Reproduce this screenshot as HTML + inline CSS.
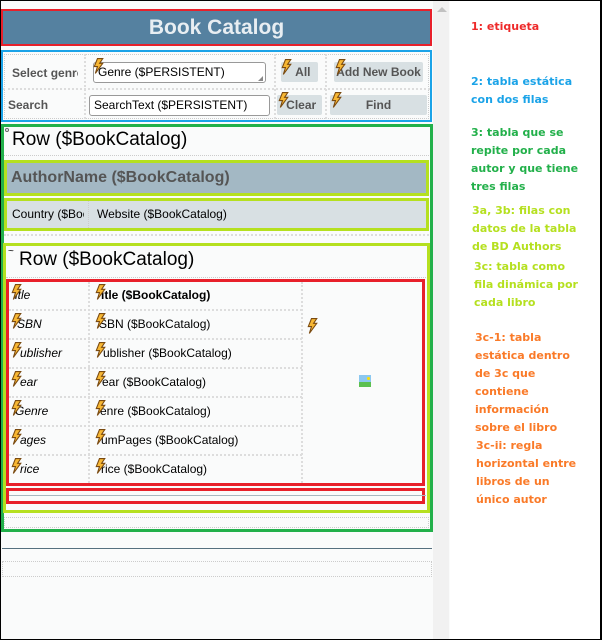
<!DOCTYPE html>
<html><head><meta charset="utf-8"><style>
*{margin:0;padding:0;box-sizing:border-box}
body{width:602px;height:640px;background:#fff;position:relative;overflow:hidden;font-family:"Liberation Sans",Arial,sans-serif}
.a{position:absolute}
.f{border:1px dotted #ccc}
.b{position:absolute;background:#d8e0e3;border-radius:2px;font-weight:bold;color:#555;font-size:12px;text-align:center;line-height:20px}
.t{position:absolute;font-size:12px;color:#000;white-space:nowrap}
.n{font-family:"DejaVu Sans",sans-serif;font-size:11px;font-weight:bold;line-height:18px;position:absolute;left:471px;white-space:nowrap}
svg.z{position:absolute;width:12px;height:16px}
</style></head><body>
<svg width="0" height="0" style="position:absolute"><defs><symbol id="bolt" viewBox="0 0 11 15"><path d="M5 0.5 L10 0.5 L7 5 L10 5 L3 14.5 L5 8 L2 8 Z" fill="#f7b733" stroke="#7a4a10" stroke-width="1"/></symbol></defs></svg>
<div class="a" style="left:0;top:0;width:450px;height:640px;background:#fafbfb"></div>
<div class="a" style="left:433px;top:0;width:16px;height:640px;background:#f1f1f1"></div>
<div class="a" style="left:437px;top:7px;width:0;height:0;border-left:5px solid transparent;border-right:5px solid transparent;border-bottom:5px solid #c1c1c1"></div>
<div class="a" style="left:0;top:0;width:602px;height:640px;border:1px solid #000;border-right-width:2px"></div>

<div class="a" style="left:1px;top:9px;width:431px;height:37px;border:2px solid #e8202a;background:#5581a0;color:#e8eef2;font-weight:bold;font-size:21px;text-align:center;line-height:33px">Book Catalog</div>

<div class="a" style="left:1px;top:50px;width:431px;height:72px;border:2px solid #1aa3e8"></div>
<div class="a f" style="left:4px;top:54px;width:425px;height:65px"></div>
<div class="a" style="left:3px;top:88px;width:427px;border-top:2px dotted #ddd"></div>
<div class="a" style="left:84px;top:54px;height:65px;border-left:2px dotted #ddd"></div>
<div class="a" style="left:274px;top:54px;height:65px;border-left:2px dotted #ddd"></div>
<div class="a" style="left:325px;top:54px;height:65px;border-left:2px dotted #ddd"></div>
<div class="t" style="left:12px;top:66px;color:#555;font-weight:bold;width:66px;overflow:hidden">Select genre</div>
<div class="t" style="left:8px;top:98px;color:#555;font-weight:bold">Search</div>
<div class="a" style="left:93px;top:62px;width:173px;height:21px;border:1px solid #999;border-radius:3px;background:#fff;font-size:12px;line-height:19px;padding-left:4px">Genre ($PERSISTENT)</div>
<div class="a" style="left:258px;top:76px;width:0;height:0;border-left:5px solid transparent;border-bottom:5px solid #888"></div>
<div class="a" style="left:89px;top:95px;width:181px;height:21px;border:1px solid #999;border-radius:3px;background:#fff;font-size:12px;line-height:19px;padding-left:4px">SearchText ($PERSISTENT)</div>
<div class="b" style="left:281px;top:62px;width:37px">&nbsp;&nbsp;All</div>
<div class="b" style="left:334px;top:62px;width:89px">Add New Book</div>
<div class="b" style="left:277px;top:95px;width:45px">&nbsp;Clear</div>
<div class="b" style="left:330px;top:95px;width:97px">Find</div>
<svg class="z" style="left:92px;top:58px"><use href="#bolt"/></svg>
<svg class="z" style="left:280px;top:59px"><use href="#bolt"/></svg>
<svg class="z" style="left:334px;top:59px"><use href="#bolt"/></svg>
<svg class="z" style="left:277px;top:92px"><use href="#bolt"/></svg>
<svg class="z" style="left:330px;top:92px"><use href="#bolt"/></svg>

<div class="a" style="left:1px;top:124px;width:432px;height:408px;border:3px solid #22b04a"></div>
<div class="t" style="left:12px;top:129px;font-size:19px">Row ($BookCatalog)</div>
<div class="a" style="left:5px;top:128px;width:4px;height:4px;border:1px solid #666;border-radius:50%"></div>
<div class="a" style="left:4px;top:155px;width:425px;border-top:1px dotted #ccc"></div>
<div class="a" style="left:4px;top:160px;width:425px;height:36px;border:3px solid #b5e01f;background:#a3b8c4;color:#555;font-weight:bold;font-size:16px;line-height:30px;padding-left:4px">AuthorName ($BookCatalog)</div>
<div class="a" style="left:4px;top:198px;width:425px;height:33px;border:3px solid #b5e01f;background:#d8e0e3"></div>
<div class="a" style="left:88px;top:201px;height:27px;border-left:1px dotted #ccc"></div>
<div class="t" style="left:12px;top:207px;width:72px;overflow:hidden">Country ($BookCatalog)</div>
<div class="t" style="left:97px;top:207px">Website ($BookCatalog)</div>
<div class="a" style="left:4px;top:234px;width:425px;border-top:2px dotted #ddd"></div>

<div class="a" style="left:3px;top:243px;width:427px;height:270px;border:3px solid #b5e01f"></div>
<div class="t" style="left:19px;top:249px;font-size:19px">Row ($BookCatalog)</div>
<div class="t" style="left:8px;top:246px;font-size:10px">~</div>
<div class="a" style="left:6px;top:277px;width:420px;border-top:1px dotted #ccc"></div>
<div class="a" style="left:6px;top:279px;width:419px;height:207px;border:3px solid #e8202a"></div>
<div class="a" style="left:88px;top:282px;height:201px;border-left:2px dotted #ddd"></div>
<div class="a" style="left:301px;top:282px;height:201px;border-left:2px dotted #ddd"></div>
<div class="a" style="left:9px;top:309px;width:293px;border-top:2px dotted #ddd"></div>
<div class="a" style="left:9px;top:338px;width:293px;border-top:2px dotted #ddd"></div>
<div class="a" style="left:9px;top:367px;width:293px;border-top:2px dotted #ddd"></div>
<div class="a" style="left:9px;top:396px;width:293px;border-top:2px dotted #ddd"></div>
<div class="a" style="left:9px;top:425px;width:293px;border-top:2px dotted #ddd"></div>
<div class="a" style="left:9px;top:454px;width:293px;border-top:2px dotted #ddd"></div>

<div class="t" style="left:15px;top:288px;font-style:italic">itle</div>
<div class="t" style="left:17px;top:317px;font-style:italic">SBN</div>
<div class="t" style="left:20px;top:346px;font-style:italic">ublisher</div>
<div class="t" style="left:20px;top:375px;font-style:italic">ear</div>
<div class="t" style="left:15px;top:404px;font-style:italic">Genre</div>
<div class="t" style="left:20px;top:433px;font-style:italic">ages</div>
<div class="t" style="left:20px;top:462px;font-style:italic">rice</div>
<div class="t" style="left:101px;top:288px;font-weight:bold">itle ($BookCatalog)</div>
<div class="t" style="left:99px;top:317px">SBN ($BookCatalog)</div>
<div class="t" style="left:103px;top:346px">ublisher ($BookCatalog)</div>
<div class="t" style="left:102px;top:375px">ear ($BookCatalog)</div>
<div class="t" style="left:100px;top:404px">enre ($BookCatalog)</div>
<div class="t" style="left:101px;top:433px">umPages ($BookCatalog)</div>
<div class="t" style="left:101px;top:462px">rice ($BookCatalog)</div>
<svg class="z" style="left:10px;top:284px"><use href="#bolt"/></svg>
<svg class="z" style="left:10px;top:313px"><use href="#bolt"/></svg>
<svg class="z" style="left:10px;top:342px"><use href="#bolt"/></svg>
<svg class="z" style="left:10px;top:371px"><use href="#bolt"/></svg>
<svg class="z" style="left:10px;top:400px"><use href="#bolt"/></svg>
<svg class="z" style="left:10px;top:429px"><use href="#bolt"/></svg>
<svg class="z" style="left:10px;top:458px"><use href="#bolt"/></svg>
<svg class="z" style="left:94px;top:284px"><use href="#bolt"/></svg>
<svg class="z" style="left:94px;top:313px"><use href="#bolt"/></svg>
<svg class="z" style="left:94px;top:342px"><use href="#bolt"/></svg>
<svg class="z" style="left:94px;top:371px"><use href="#bolt"/></svg>
<svg class="z" style="left:94px;top:400px"><use href="#bolt"/></svg>
<svg class="z" style="left:94px;top:429px"><use href="#bolt"/></svg>
<svg class="z" style="left:94px;top:458px"><use href="#bolt"/></svg>
<svg class="z" style="left:306px;top:318px"><use href="#bolt"/></svg>
<div class="a" style="left:359px;top:375px;width:12px;height:12px;background:#8cc8f0"><div class="a" style="left:0;top:7px;width:12px;height:5px;background:#5cc050"></div><div class="a" style="left:8px;top:2px;width:3px;height:3px;background:#ffe000;border-radius:50%"></div></div>

<div class="a" style="left:6px;top:488px;width:419px;height:16px;border:3px solid #e8202a"></div>
<div class="a" style="left:9px;top:495px;width:417px;border-top:1px solid #a8b8c0"></div>
<div class="a" style="left:4px;top:517px;width:425px;height:11px;border:1px dotted #ccc"></div>

<div class="a" style="left:2px;top:548px;width:430px;border-top:1px solid #56707f"></div>
<div class="a" style="left:2px;top:561px;width:430px;height:16px;border:1px dotted #ccc"></div>

<div class="n" style="top:18px;color:#ee2a2a">1: etiqueta</div>
<div class="n" style="top:73px;color:#1aa3e8">2: tabla estática<br>con dos filas</div>
<div class="n" style="top:124px;color:#22b04a">3: tabla que se<br>repite por cada<br>autor y que tiene<br>tres filas</div>
<div class="n" style="top:202px;left:472px;color:#b5e01f">3a, 3b: filas con<br>datos de la tabla<br>de BD Authors</div>
<div class="n" style="top:258px;left:474px;color:#b5e01f">3c: tabla como<br>fila dinámica por<br>cada libro</div>
<div class="n" style="top:329px;left:475px;color:#fa7a28">3c-1: tabla<br>estática dentro<br>de 3c que<br>contiene<br>información<br>sobre el libro</div>
<div class="n" style="top:437px;left:476px;color:#fa7a28">3c-ii: regla<br>horizontal entre<br>libros de un<br>único autor</div>
</body></html>
